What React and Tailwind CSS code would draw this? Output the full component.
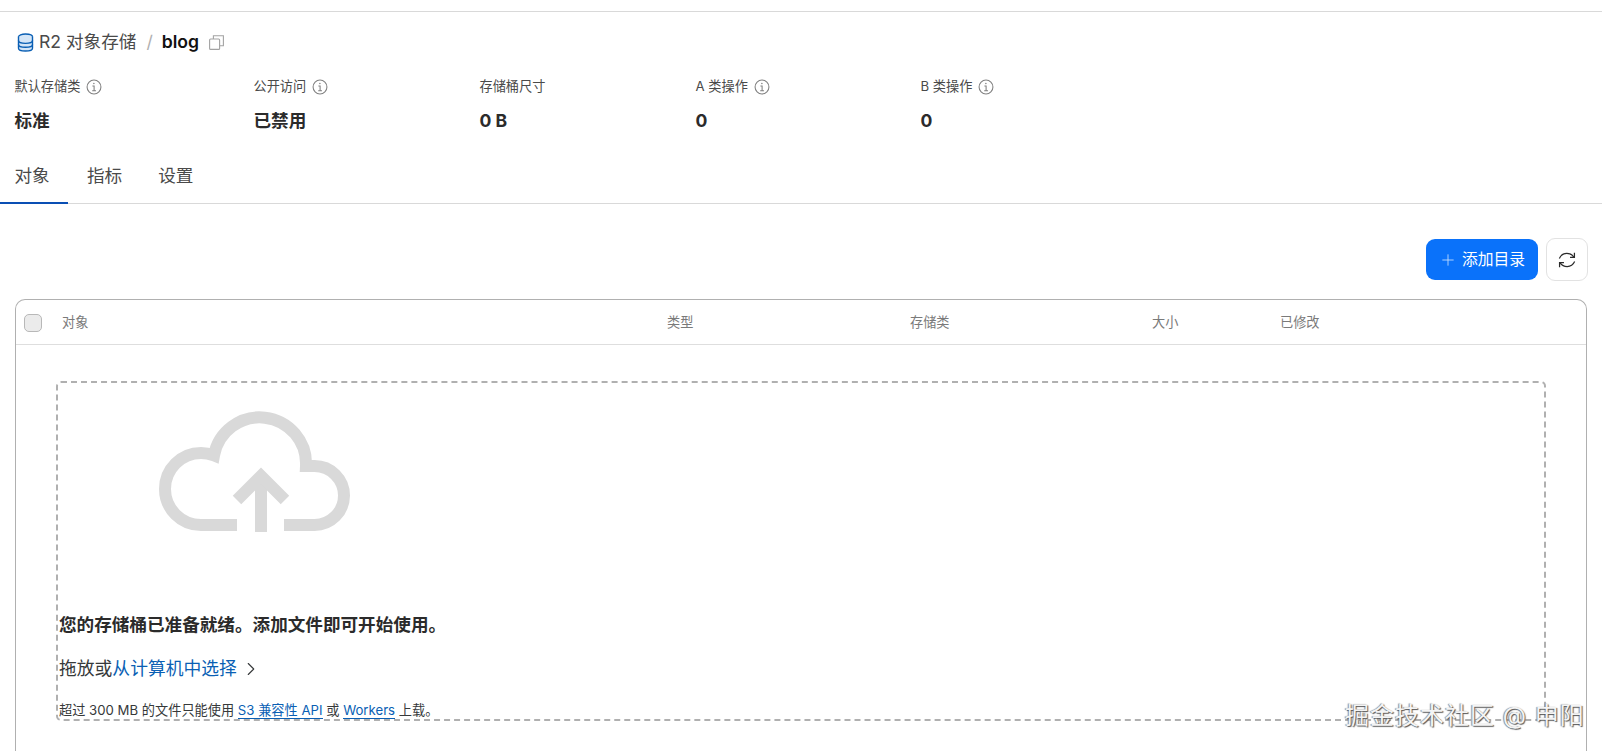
import React from 'react';
import { ChevronRight, Plus } from 'lucide-react';

const FONT = "font-['Inter','Noto_Sans_CJK_SC',sans-serif]";

const stats = [
  { label: '默认存储类', value: '标准', info: true, width: 'w-[239px]' },
  { label: '公开访问', value: '已禁用', info: true, width: 'w-[226px]' },
  { label: '存储桶尺寸', value: '0 B', info: false, width: 'w-[216px]' },
  { label: 'A 类操作', value: '0', info: true, width: 'w-[225px]' },
  { label: 'B 类操作', value: '0', info: true, width: 'w-[225px]' },
];

const columns = [
  { label: '对象', width: 'w-[605px]' },
  { label: '类型', width: 'w-[243px]' },
  { label: '存储类', width: 'w-[242px]' },
  { label: '大小', width: 'w-[128px]' },
  { label: '已修改', width: 'w-[120px]' },
];

function InfoIcon() {
  return (
    <svg width="16" height="16" viewBox="0 0 15 15" fill="none" stroke="#808080" strokeWidth="1">
      <circle cx="7.5" cy="7.5" r="6.5" />
      <path d="M6 6.5h1.6V11M5.8 11h3.6" />
      <circle cx="7.4" cy="4.3" r="0.7" fill="#808080" stroke="none" />
    </svg>
  );
}

function DatabaseIcon() {
  return (
    <svg width="17" height="19" viewBox="0 0 17 19" fill="none" stroke="#0a5fb4" strokeWidth="1.4">
      <ellipse cx="8.5" cy="3.8" rx="7" ry="2.8" fill="#d5e6f7" />
      <path d="M1.5 3.8v11.4c0 1.6 3.1 2.8 7 2.8s7-1.2 7-2.8V3.8" fill="#d5e6f7" />
      <path d="M1.5 7.6c0 1.6 3.1 2.8 7 2.8s7-1.2 7-2.8M1.5 11.4c0 1.6 3.1 2.8 7 2.8s7-1.2 7-2.8" />
    </svg>
  );
}

function CopyIcon() {
  return (
    <svg width="15" height="15" viewBox="0 0 15 15" fill="none" stroke="#a3a3a3" strokeWidth="1.1">
      <rect x="0.6" y="4" width="10" height="10.4" rx="1" />
      <path d="M4.4 4V0.7h10v10h-3.8" />
    </svg>
  );
}

function RefreshIcon() {
  return (
    <svg width="18" height="18" viewBox="0 0 16 16" fill="none" stroke="#2b2b2b" strokeWidth="1.1">
      <path d="M1.2 6.6C2.6 3.6 5 2.2 7.8 2.2c2.6 0 4.8 1 6.3 3.3" />
      <path d="M14.6 1.6v4h-3.9" />
      <path d="M14.8 9.4c-1.4 3-3.8 4.4-6.6 4.4-2.6 0-4.8-1-6.3-3.3" />
      <path d="M1.4 14.4v-4h3.9" />
    </svg>
  );
}

function CloudIcon() {
  return (
    <svg width="192" height="122" viewBox="0 0 192 122" fill="none" stroke="#d9d9d9" strokeWidth="12">
      <path d="M78 115H42a36 36 0 0 1 0-72c5 0 9 1 13 2.5A46.4 46.4 0 0 1 147 56h8.5a29.5 29.5 0 0 1 0 59H125" strokeMiterlimit="10" />
      <path d="M102 122V66" />
      <path d="M78 90l24-24 24 24" strokeMiterlimit="10" />
    </svg>
  );
}

export default function App() {
  return (
    <div className={`${FONT} relative h-[751px] overflow-hidden bg-white text-[#2b2b2b]`}>
      <div className="h-3 border-b border-[#d9d9d9]"></div>

      {/* Breadcrumb */}
      <div className="flex items-center h-[26px] mt-[17px] pl-[17px] text-[17.6px]">
        <DatabaseIcon />
        <span className="ml-[5px] text-[#4a4a4a]">R2 对象存储</span>
        <span className="ml-[10px] text-[#b0b0b0]">/</span>
        <span className="ml-[9px] font-semibold text-[#111]">blog</span>
        <span className="ml-[10px] flex"><CopyIcon /></span>
      </div>

      {/* Stats */}
      <div className="flex mt-[23px] pl-[14.5px]">
        {stats.map(s => (
          <div key={s.label} className={s.width}>
            <div className="flex items-center gap-[6px] h-[18px] text-[13.2px] text-[#4a4a4a]">
              {s.label}
              {s.info && <InfoIcon />}
            </div>
            <div className="mt-[12px] h-[26px] leading-[26px] text-[17.6px] font-bold text-[#2b2b2b]">{s.value}</div>
          </div>
        ))}
      </div>

      {/* Tabs */}
      <div className="flex mt-[26px] h-[44px] border-b border-[#d9d9d9] text-[17.6px] text-[#4a4a4a]">
        <div className="w-[68px] pl-[14.5px] pt-[3px] h-[44px] border-b-[2px] border-[#0a4fb4]">对象</div>
        <div className="ml-[19px] pt-[3px]">指标</div>
        <div className="ml-[36px] pt-[3px]">设置</div>
      </div>

      {/* Actions */}
      <div className="flex justify-end items-center gap-2 mt-[34px] pr-[14px]">
        <button className="flex items-center justify-center gap-[5px] w-[112px] h-[41px] rounded-[9px] bg-[#0a72fa] text-white text-[15.8px]">
          <Plus size={18} strokeWidth={1.1} className="text-[#cfe3fe]" />
          添加目录
        </button>
        <button className="flex items-center justify-center w-[42px] h-[43px] rounded-[9px] border border-[#e2e2e2] bg-white">
          <RefreshIcon />
        </button>
      </div>

      {/* Table */}
      <div className="mt-[18px] mx-[15px] h-[500px] rounded-t-[10px] border border-[#b0b0b0] border-b-0">
        <div className="flex items-center h-[45px] pt-[2px] border-b border-[#dedede]">
          <span className="ml-[8px] w-[18px] h-[18px] rounded-[5px] border border-[#b8b8b8] bg-[#ebebeb]"></span>
          <div className="flex ml-[20px] text-[13.2px] text-[#7a7a7a]">
            {columns.map(c => (
              <span key={c.label} className={c.width}>{c.label}</span>
            ))}
          </div>
        </div>

        {/* Drop zone */}
        <div className="mt-[36px] mx-[40px] h-[340px] pl-[1px] rounded-[5px] border-[2px] border-dashed border-[#b0b0b0]">
          <div className="mt-[27px] ml-[100px] flex"><CloudIcon /></div>
          <div className="mt-[80px] text-[17.6px] leading-[26px] font-bold text-[#2b2b2b]">您的存储桶已准备就绪。添加文件即可开始使用。</div>
          <div className="flex items-center mt-[17px] h-[28px] text-[17.8px] text-[#36393a]">
            拖放或<span className="text-[#0a5fb4]">从计算机中选择</span>
            <ChevronRight size={22} strokeWidth={1.2} className="ml-[3px]" />
          </div>
          <div className="mt-[17px] text-[13.2px] leading-[20px] text-[#36393a] whitespace-nowrap">
            超过 300 MB 的文件只能使用 <span className="text-[#0a5fb4] border-b border-[#0a5fb4]">S3 兼容性 API</span> 或 <span className="text-[#0a5fb4] border-b border-[#0a5fb4]">Workers</span> 上载。
          </div>
        </div>
      </div>

      {/* Watermark */}
      <div className="absolute left-[1345px] top-[700px] text-[24px] leading-[32px] tracking-[1px] whitespace-nowrap text-[#f4f4f4] [text-shadow:1px_1px_1px_#555,-1px_0_1px_#888]">
        掘金技术社区 @ 申阳
      </div>
    </div>
  );
}
